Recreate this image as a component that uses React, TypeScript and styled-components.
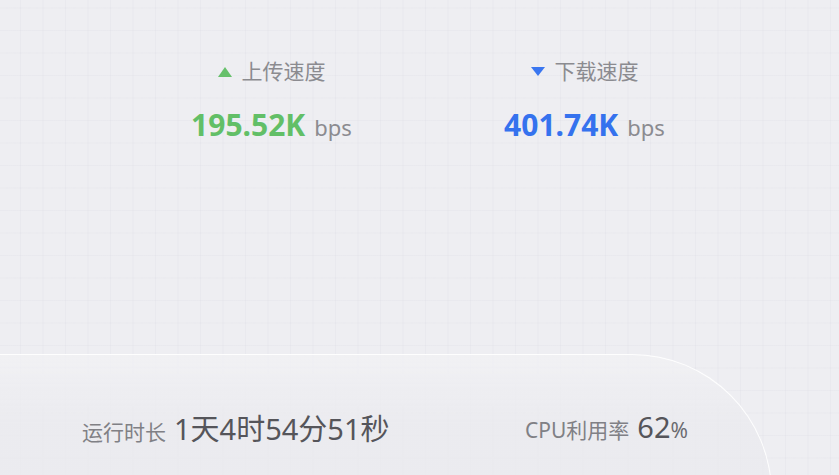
import React from "react";
import styled, { createGlobalStyle } from "styled-components";

const GlobalStyle = createGlobalStyle`
  html, body { margin: 0; padding: 0; }
  body {
    font-family: "Noto Sans", "Noto Sans CJK SC", sans-serif;
    background: #eeeef2;
    overflow: hidden;
  }
`;

const Page = styled.div`
  height: 100vh;
  display: flex;
  flex-direction: column;
  background-color: #eeeef2;
  background-image:
    linear-gradient(to right, rgba(215, 215, 225, 0.22) 1px, transparent 1px),
    linear-gradient(to bottom, rgba(215, 215, 225, 0.22) 1px, transparent 1px);
  background-size: 22.5px 22.5px;
  background-position: 20px 7.5px;
  overflow: hidden;
`;

const SpeedRow = styled.div`
  display: flex;
  padding: 57px 0 0 115px;
`;

const SpeedCard = styled.div`
  width: 313px;
  display: flex;
  flex-direction: column;
  align-items: center;
  gap: 20px;
`;

const SpeedLabel = styled.div`
  display: flex;
  align-items: center;
  gap: 10px;
  font-size: 21px;
  line-height: 29px;
  color: #8b8b90;
`;

const Arrow = styled.span<{ $dir: "up" | "down"; $color: string }>`
  width: 0;
  height: 0;
  border-left: 7.5px solid transparent;
  border-right: 7.5px solid transparent;
  ${(p) =>
    p.$dir === "up"
      ? `border-bottom: 10px solid ${p.$color};`
      : `border-top: 9px solid ${p.$color};`}
`;

const SpeedValue = styled.div`
  display: flex;
  align-items: baseline;
  gap: 9px;
`;

const Number = styled.span<{ $color: string }>`
  font-size: 30px;
  line-height: 38px;
  font-weight: 700;
  color: ${(p) => p.$color};
`;

const Unit = styled.span`
  font-size: 22px;
  color: #8b8b90;
`;

const Spacer = styled.div`
  flex: 1;
`;

const StatusPanel = styled.div`
  width: 772px;
  height: 140px;
  margin-bottom: -19px;
  box-sizing: border-box;
  border-top: 1px solid rgba(255, 255, 255, 0.95);
  border-right: 1px solid rgba(255, 255, 255, 0.95);
  border-top-right-radius: 140px 140px;
  background: linear-gradient(
    to bottom,
    rgba(241, 241, 244, 0.85),
    rgba(234, 234, 238, 0.8) 50%
  );
  display: grid;
  grid-template-columns: 443px 1fr;
  align-items: center;
  padding: 4px 0 0 82px;
`;

const Stat = styled.div`
  display: flex;
  align-items: baseline;
  gap: 8px;
  white-space: nowrap;
`;

const StatLabel = styled.span`
  font-size: 21px;
  color: #808085;
`;

const StatValue = styled.span`
  font-size: 29px;
  color: #55555a;
`;

const Percent = styled.span`
  font-size: 21px;
  color: #6a6a6f;
`;

export default function App() {
  return (
    <>
      <GlobalStyle />
      <Page>
        <SpeedRow>
          <SpeedCard>
            <SpeedLabel>
              <Arrow $dir="up" $color="#66c06b" />
              上传速度
            </SpeedLabel>
            <SpeedValue>
              <Number $color="#62bf67">195.52K</Number>
              <Unit>bps</Unit>
            </SpeedValue>
          </SpeedCard>
          <SpeedCard>
            <SpeedLabel>
              <Arrow $dir="down" $color="#3a76f0" />
              下载速度
            </SpeedLabel>
            <SpeedValue>
              <Number $color="#3572ee">401.74K</Number>
              <Unit>bps</Unit>
            </SpeedValue>
          </SpeedCard>
        </SpeedRow>
        <Spacer />
        <StatusPanel>
          <Stat>
            <StatLabel>运行时长</StatLabel>
            <StatValue>1天4时54分51秒</StatValue>
          </Stat>
          <Stat>
            <StatLabel>CPU利用率</StatLabel>
            <StatValue>
              62<Percent>%</Percent>
            </StatValue>
          </Stat>
        </StatusPanel>
      </Page>
    </>
  );
}
